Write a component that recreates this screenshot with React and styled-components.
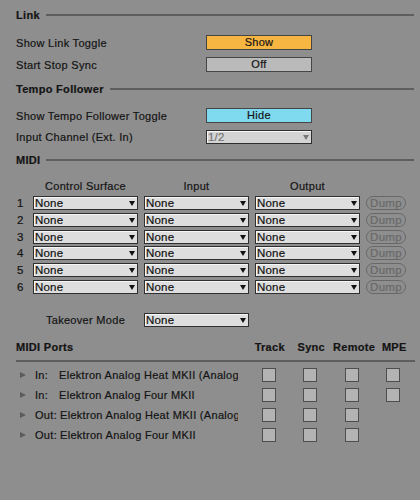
import React from "react";
import styled, { createGlobalStyle } from "styled-components";

const GlobalStyle = createGlobalStyle`
  html, body {
    margin: 0;
    background: #8e8e8e;
  }
  body {
    font-family: "Liberation Sans", Arial, sans-serif;
    font-size: 11px;
    letter-spacing: 0.3px;
    color: #141414;
    -webkit-text-stroke: 0.2px currentColor;
  }
`;

const Page = styled.div`
  width: 420px;
  height: 500px;
  box-sizing: border-box;
  padding: 7px 6px 0 16px;
  background: #8e8e8e;
`;

const SectionHeader = styled.div`
  display: flex;
  align-items: center;
  height: 16px;
  font-weight: bold;
  margin-bottom: ${(p) => p.$gap || 0}px;

  &::after {
    content: "";
    flex: 1;
    height: 2px;
    margin-left: 6px;
    background: #5e5e5e;
  }
`;

const Block = styled.div`
  display: flex;
  flex-direction: column;
  gap: 8px;
  margin-bottom: ${(p) => p.$after || 0}px;
`;

const SettingRow = styled.div`
  display: grid;
  grid-template-columns: 190px 106px;
  align-items: center;
  height: 14px;
`;

const ToggleButton = styled.div`
  box-sizing: border-box;
  height: 15px;
  border: 1px solid #454545;
  background: ${(p) => p.$color};
  text-align: center;
  line-height: 13px;
`;

const Select = styled.div`
  position: relative;
  box-sizing: border-box;
  height: 14px;
  border: 1px solid #2f2f2f;
  background: ${(p) => (p.$disabled ? "#d4d4d4" : "#dedede")};
  box-shadow: inset 1px 1px 0 #f6f6f6;
  color: ${(p) => (p.$disabled ? "#757575" : "#111")};
  line-height: 12px;
  padding-left: 1px;
  font-size: 11.5px;
  letter-spacing: 0.2px;
  overflow: hidden;
  white-space: nowrap;

  &::after {
    content: "";
    position: absolute;
    right: 2px;
    top: 4px;
    border-left: 3.5px solid transparent;
    border-right: 3.5px solid transparent;
    border-top: 5px solid ${(p) => (p.$disabled ? "#777" : "#111")};
  }
`;

const Matrix = styled.div`
  display: grid;
  grid-template-columns: 11px 105px 105px 105px 40px;
  grid-template-rows: auto;
  grid-auto-rows: 14px;
  column-gap: 6px;
  row-gap: 2.7px;
  align-items: center;
`;

const ColumnTitle = styled.div`
  text-align: center;
  margin-top: 11.5px;
  margin-bottom: 2px;
`;

const RowNumber = styled.div`
  padding-left: 1px;
  font-size: 11.5px;
`;

const DumpButton = styled.div`
  box-sizing: border-box;
  height: 14px;
  border: 1px solid #686868;
  border-radius: 7px;
  color: #686868;
  text-align: center;
  line-height: 12px;
  font-size: 11.5px;
`;

const TakeoverRow = styled.div`
  display: grid;
  grid-template-columns: 11px 105px 105px;
  column-gap: 6px;
  align-items: center;
  height: 14px;
  margin: 19px 0 13px;
`;

const TakeoverLabel = styled.div`
  grid-column: 2;
  text-align: center;
`;

const PortGrid = styled.div`
  display: grid;
  grid-template-columns: 232px repeat(4, 41.5px);
  align-items: center;
`;

const PortHeader = styled.div`
  height: 14px;
  line-height: 14px;
  font-weight: bold;
  text-align: ${(p) => (p.$left ? "left" : "center")};
  padding-left: ${(p) => (p.$left ? 0 : 2)}px;
`;

const Rule = styled.div`
  grid-column: 1 / -1;
  height: 2px;
  margin: 6px -1px 6px 0;
  background: #5e5e5e;
`;

const PortName = styled.div`
  display: flex;
  align-items: center;
  height: 14px;
  margin: 0 10px 6px 0;
  overflow: hidden;
  white-space: nowrap;

  &::before {
    content: "";
    flex: none;
    margin: 0 9px 0 4px;
    border-top: 3.5px solid transparent;
    border-bottom: 3.5px solid transparent;
    border-left: 6px solid #5c5c5c;
  }
`;

const Direction = styled.span`
  flex: none;
  min-width: ${(p) => (p.$wide ? 21 : 0)}px;
  margin-right: 3px;
`;

const Cell = styled.div`
  display: flex;
  justify-content: center;
  height: 14px;
  margin-bottom: 6px;
`;

const Check = styled.div`
  box-sizing: border-box;
  width: 14px;
  height: 14px;
  border: 1px solid #4e4e4e;
  background: #b3b3b3;
`;

const ports = [
  { dir: "In:", name: "Elektron Analog Heat MKII (Analog Heat MKII)", mpe: true },
  { dir: "In:", name: "Elektron Analog Four MKII", mpe: true },
  { dir: "Out:", name: "Elektron Analog Heat MKII (Analog Heat MKII)", mpe: false },
  { dir: "Out:", name: "Elektron Analog Four MKII", mpe: false },
];

const App = () => (
  <Page>
    <GlobalStyle />

    <SectionHeader $gap={12}>Link</SectionHeader>
    <Block $after={10}>
      <SettingRow>
        <span>Show Link Toggle</span>
        <ToggleButton $color="#f7b541">Show</ToggleButton>
      </SettingRow>
      <SettingRow>
        <span>Start Stop Sync</span>
        <ToggleButton $color="#bababa">Off</ToggleButton>
      </SettingRow>
    </Block>

    <SectionHeader $gap={11}>Tempo Follower</SectionHeader>
    <Block $after={8}>
      <SettingRow>
        <span>Show Tempo Follower Toggle</span>
        <ToggleButton $color="#7fdaf0">Hide</ToggleButton>
      </SettingRow>
      <SettingRow>
        <span>Input Channel (Ext. In)</span>
        <Select $disabled>1/2</Select>
      </SettingRow>
    </Block>

    <SectionHeader>MIDI</SectionHeader>
    <Matrix>
      <span />
      <ColumnTitle>Control Surface</ColumnTitle>
      <ColumnTitle>Input</ColumnTitle>
      <ColumnTitle>Output</ColumnTitle>
      <span />
      {[1, 2, 3, 4, 5, 6].map((n) => (
        <React.Fragment key={n}>
          <RowNumber>{n}</RowNumber>
          <Select>None</Select>
          <Select>None</Select>
          <Select>None</Select>
          <DumpButton>Dump</DumpButton>
        </React.Fragment>
      ))}
    </Matrix>

    <TakeoverRow>
      <TakeoverLabel>Takeover Mode</TakeoverLabel>
      <Select>None</Select>
    </TakeoverRow>

    <PortGrid>
      <PortHeader $left>MIDI Ports</PortHeader>
      <PortHeader>Track</PortHeader>
      <PortHeader>Sync</PortHeader>
      <PortHeader>Remote</PortHeader>
      <PortHeader>MPE</PortHeader>
      <Rule />
      {ports.map((port, i) => (
        <React.Fragment key={i}>
          <PortName>
            <Direction $wide={port.dir === "In:"}>{port.dir}</Direction>
            {port.name}
          </PortName>
          <Cell><Check /></Cell>
          <Cell><Check /></Cell>
          <Cell><Check /></Cell>
          <Cell>{port.mpe && <Check />}</Cell>
        </React.Fragment>
      ))}
    </PortGrid>
  </Page>
);

export default App;
